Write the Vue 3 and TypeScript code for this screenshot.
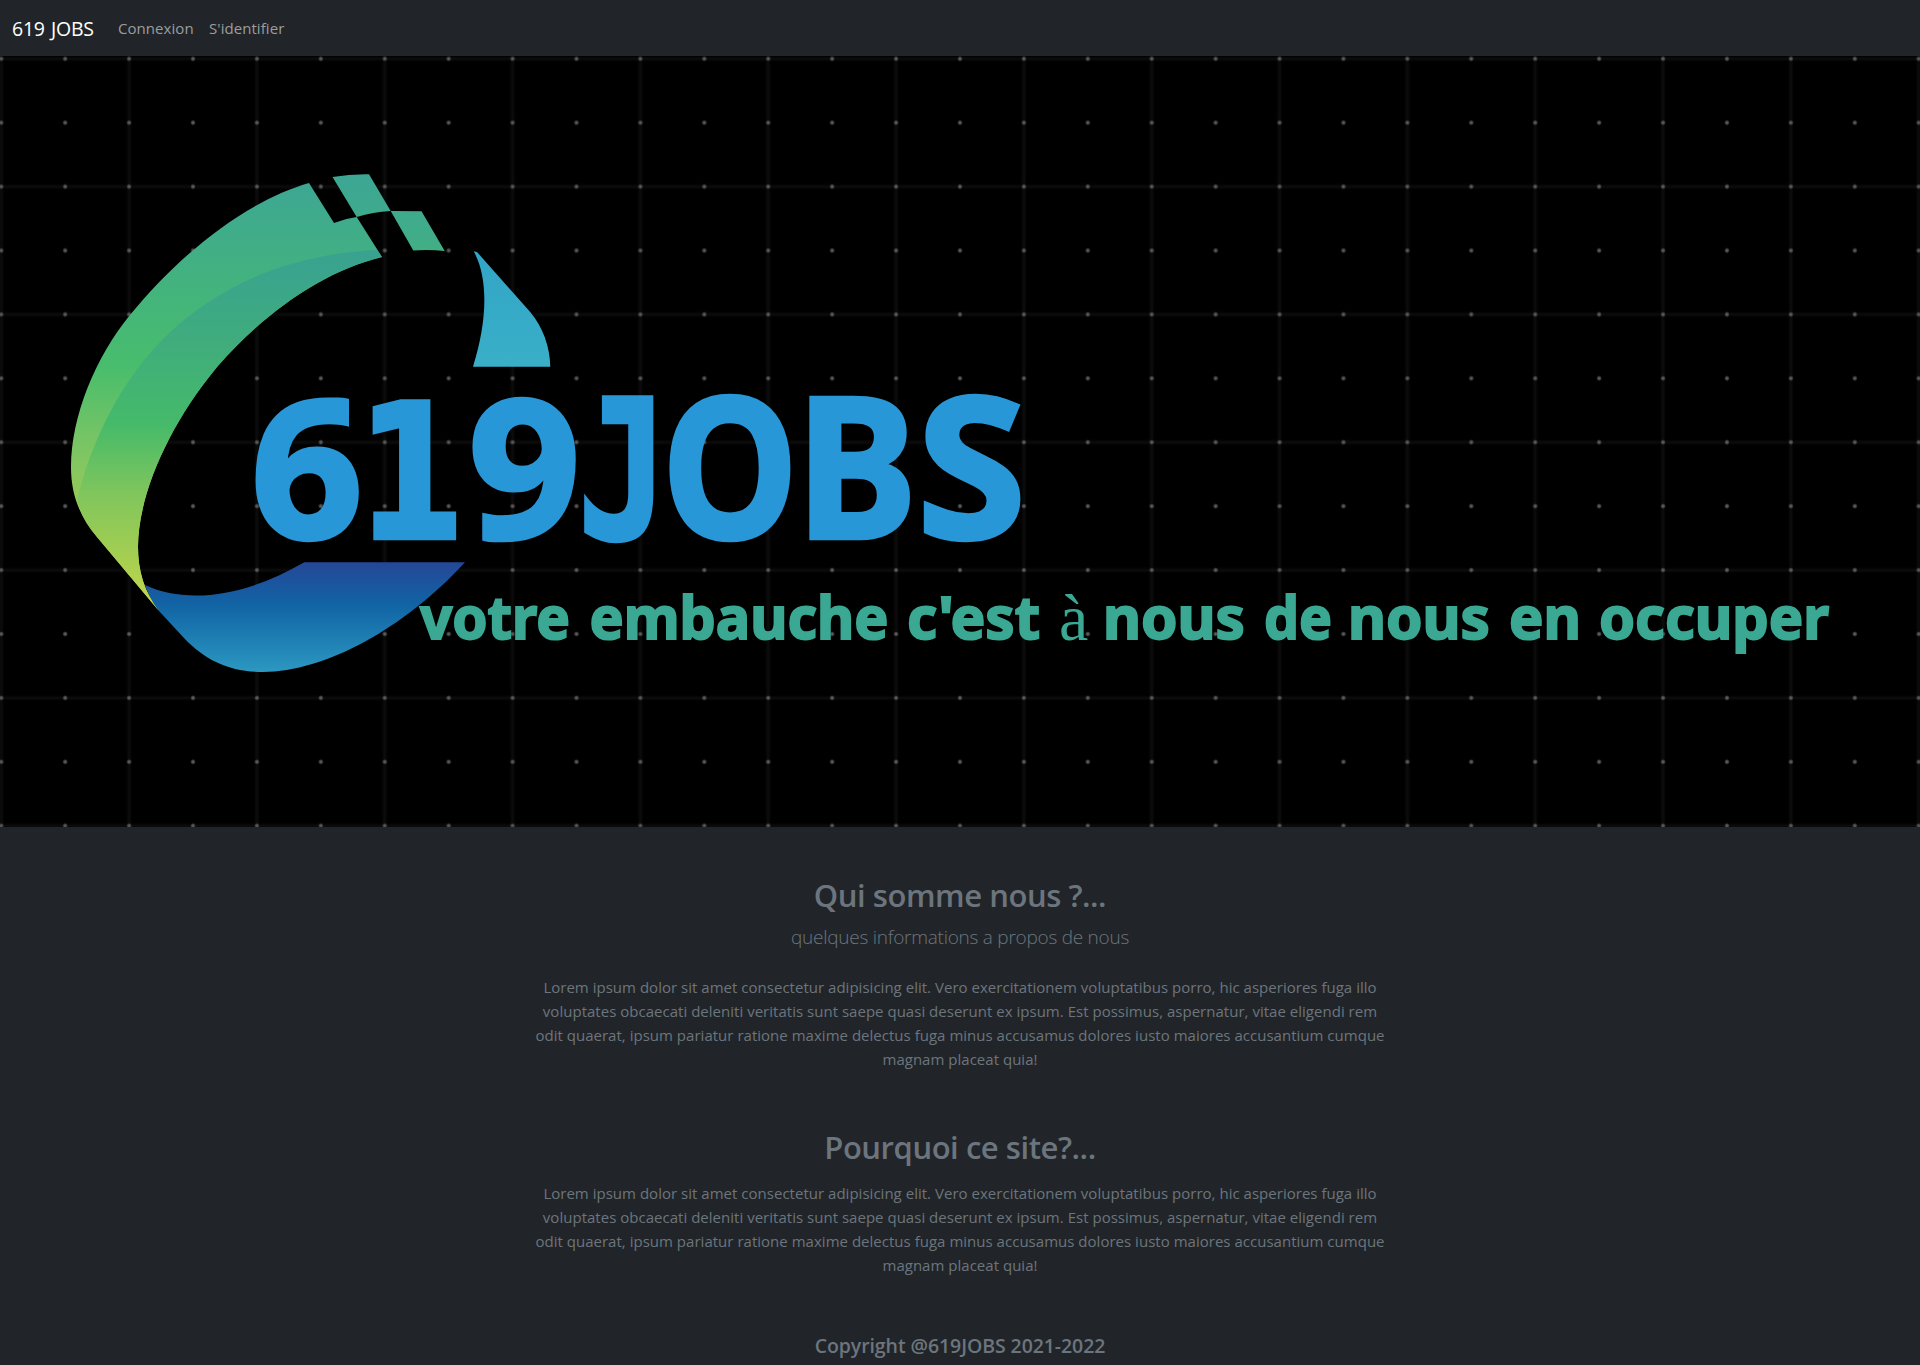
<script setup lang="ts">
interface Glyph {
  char: string
  font: string
  size: number
  x: number
  width: number
}

interface Word {
  text: string
  x: number
  width: number
}

const noto = "'Noto Sans', sans-serif"

// Wordmark letters, each one placed and condensed on its own
const wordmark: Glyph[] = [
  { char: '6', font: noto, size: 192, x: 251, width: 112 },
  { char: '1', font: "'DejaVu Sans', sans-serif", size: 188, x: 357, width: 108 },
  { char: '9', font: noto, size: 192, x: 468.5, width: 112 },
  { char: 'J', font: "'DejaVu Sans Mono', monospace", size: 192, x: 578, width: 90 },
  { char: 'O', font: noto, size: 195, x: 662, width: 136 },
  { char: 'B', font: noto, size: 195, x: 796, width: 121 },
  { char: 'S', font: noto, size: 195, x: 917, width: 109 },
]

const slogan: Word[] = [
  { text: 'votre', x: 420, width: 150 },
  { text: 'embauche', x: 589.5, width: 299 },
  { text: "c'est", x: 907, width: 133 },
  { text: 'nous', x: 1103, width: 142 },
  { text: 'de', x: 1264, width: 68 },
  { text: 'nous', x: 1348, width: 142 },
  { text: 'en', x: 1509, width: 72 },
  { text: 'occuper', x: 1599, width: 230 },
]

const lorem: string[] = [
  'Lorem ipsum dolor sit amet consectetur adipisicing elit. Vero exercitationem voluptatibus porro, hic asperiores fuga illo',
  'voluptates obcaecati deleniti veritatis sunt saepe quasi deserunt ex ipsum. Est possimus, aspernatur, vitae eligendi rem',
  'odit quaerat, ipsum pariatur ratione maxime delectus fuga minus accusamus dolores iusto maiores accusantium cumque',
  'magnam placeat quia!',
]
</script>

<template>
  <div class="page">
    <nav class="navbar">
      <a class="brand">619 JOBS</a>
      <a class="link">Connexion</a>
      <a class="link">S'identifier</a>
    </nav>

    <svg class="hero" viewBox="0 56 1920 771" width="1920" height="771">
      <defs>
        <radialGradient id="dot">
          <stop offset="0" stop-color="#6a6a6a" />
          <stop offset="0.5" stop-color="#484848" />
          <stop offset="1" stop-color="#333" stop-opacity="0" />
        </radialGradient>
        <pattern id="lines" x="-62.6" y="-5.1" width="127.83" height="127.83" patternUnits="userSpaceOnUse">
          <path d="M63.9 0V127.83M0 63.9H127.83" stroke="#040404" stroke-width="5" />
          <path d="M63.9 0V127.83M0 63.9H127.83" stroke="#0b0b0b" stroke-width="2.6" />
        </pattern>
        <pattern id="dots" x="-30.7" y="26.8" width="63.915" height="63.915" patternUnits="userSpaceOnUse">
          <circle cx="31.96" cy="31.96" r="2.9" fill="url(#dot)" />
        </pattern>
        <linearGradient id="ring" gradientUnits="userSpaceOnUse" x1="0" y1="174" x2="0" y2="611">
          <stop offset="0" stop-color="#3ca694" />
          <stop offset="0.2" stop-color="#42b083" />
          <stop offset="0.44" stop-color="#48bd6c" />
          <stop offset="0.6" stop-color="#75c465" />
          <stop offset="0.75" stop-color="#95ca59" />
          <stop offset="1" stop-color="#c4d94c" />
        </linearGradient>
        <linearGradient id="fold" gradientUnits="userSpaceOnUse" x1="0" y1="250" x2="0" y2="611">
          <stop offset="0" stop-color="#38a291" />
          <stop offset="0.25" stop-color="#40ac7d" />
          <stop offset="0.48" stop-color="#45ba6a" />
          <stop offset="0.68" stop-color="#81c65c" />
          <stop offset="0.85" stop-color="#a4ce51" />
          <stop offset="1" stop-color="#c6d94b" />
        </linearGradient>
        <linearGradient id="wave" x1="0" y1="0" x2="0" y2="1">
          <stop offset="0" stop-color="#254798" />
          <stop offset="0.38" stop-color="#1163a4" />
          <stop offset="1" stop-color="#2c98c1" />
        </linearGradient>
        <linearGradient id="fin" x1="0" y1="0" x2="0" y2="1">
          <stop offset="0" stop-color="#31a5c5" />
          <stop offset="1" stop-color="#3aafc8" />
        </linearGradient>
      </defs>

      <rect y="56" width="1920" height="771" fill="#000" />
      <rect y="56" width="1920" height="771" fill="url(#lines)" />
      <rect y="56" width="1920" height="771" fill="url(#dots)" />

      <path fill="url(#wave)" d="M145 585C190 606 250 594 304.300 562.300H465C405 628 325 672 263 672C230 672 206 661 184 638L159 611L150 598Z" />
      <path fill="url(#ring)" d="M309 183C250 200 184 249 130 315C96 356 71 416 71 467C71 495 80 517 97 537L159 611C144 592 138 570 138 547C138 496 168 426 217 367C265 312 324 271 382 257L356.700 217Q345 218.500 334 223Z" />
      <path fill="url(#fold)" d="M377 250C293 254 220 283 165 337C120 382 92 440 77 500Q82 520 97 537L159 611C144 592 138 570 138 547C138 496 168 426 217 367C265 312 324 271 382 257Z" />
      <path fill="url(#ring)" d="M332.500 177Q350 174 369 174.300L390.700 211Q373 212 356.700 217Z" />
      <path fill="url(#ring)" d="M390.700 211L421.500 211.300L444.700 251Q429 249.500 413.300 250.500Z" />
      <path fill="url(#fin)" d="M473.700 251.300L477 252L530 311.700C543 327 550 347 550.300 366.700H473C487 322 489 279 473.700 251.300Z" />

      <text class="wordmark" y="538"><tspan
        v-for="g in wordmark"
        :key="g.char"
        :x="g.x"
        :font-family="g.font"
        :font-size="g.size"
        :textLength="g.width"
        lengthAdjust="spacingAndGlyphs"
      >{{ g.char }}</tspan></text>
      <g class="slogan">
        <text
          v-for="w in slogan"
          :key="w.x"
          :x="w.x"
          y="639"
          :textLength="w.width"
          lengthAdjust="spacingAndGlyphs"
        >{{ w.text }}</text>
        <text class="accent" x="1059" y="639.5">à</text>
      </g>
    </svg>

    <main class="content">
      <section class="about">
        <h2>Qui somme nous ?...</h2>
        <p class="lead">quelques informations a propos de nous</p>
        <p class="body"><span v-for="line in lorem" :key="line">{{ line }}</span></p>
      </section>
      <section class="why">
        <h2 class="why-title">Pourquoi ce site?...</h2>
        <p class="body"><span v-for="line in lorem" :key="line">{{ line }}</span></p>
      </section>
      <footer>Copyright @619JOBS 2021-2022</footer>
    </main>
  </div>
</template>

<style>
body {
  margin: 0;
  background: #212529;
}
</style>

<style scoped>
.page {
  width: 1920px;
  height: 1365px;
  overflow: hidden;
  background: #212529;
  color: #6c757d;
  font-family: 'Open Sans', 'Noto Sans', sans-serif;
}
.navbar {
  display: flex;
  align-items: center;
  box-sizing: border-box;
  height: 56px;
  padding-left: 12px;
  white-space: nowrap;
}
.brand {
  width: 106px;
  color: #fff;
  font-size: 19.5px;
  letter-spacing: -0.25px;
  word-spacing: 1.5px;
}
.link {
  width: 91px;
  color: #9b9d9f;
  font-size: 15px;
  letter-spacing: 0.06px;
}
.hero {
  display: block;
}
.wordmark {
  fill: #2897d8;
  stroke: #2897d8;
  stroke-width: 4.5px;
  font-weight: 700;
}
.slogan {
  fill: #3aa893;
  stroke: #3aa893;
  stroke-width: 2px;
  font-family: 'Noto Sans', sans-serif;
  font-size: 60px;
  font-weight: 700;
}
.accent {
  stroke: none;
  font-family: 'Liberation Serif', serif;
  font-size: 66px;
  font-weight: 400;
}
.content {
  display: flex;
  flex-direction: column;
  align-items: center;
  padding-top: 48px;
  text-align: center;
  white-space: nowrap;
}
h2 {
  margin: 0 0 7px;
  font-size: 31px;
  font-weight: 600;
  letter-spacing: -0.45px;
  line-height: 40px;
}
.why-title {
  margin-bottom: 14px;
}
p {
  margin: 0;
}
.lead {
  margin-bottom: 23px;
  font-size: 19px;
  font-weight: 300;
  letter-spacing: -0.25px;
  line-height: 30px;
}
.body {
  display: flex;
  flex-direction: column;
  font-size: 15px;
  letter-spacing: 0.02px;
  line-height: 24px;
}
.why {
  margin-top: 56px;
}
footer {
  margin-top: 57px;
  font-size: 19.5px;
  font-weight: 600;
  letter-spacing: -0.08px;
  line-height: 24px;
}
</style>
